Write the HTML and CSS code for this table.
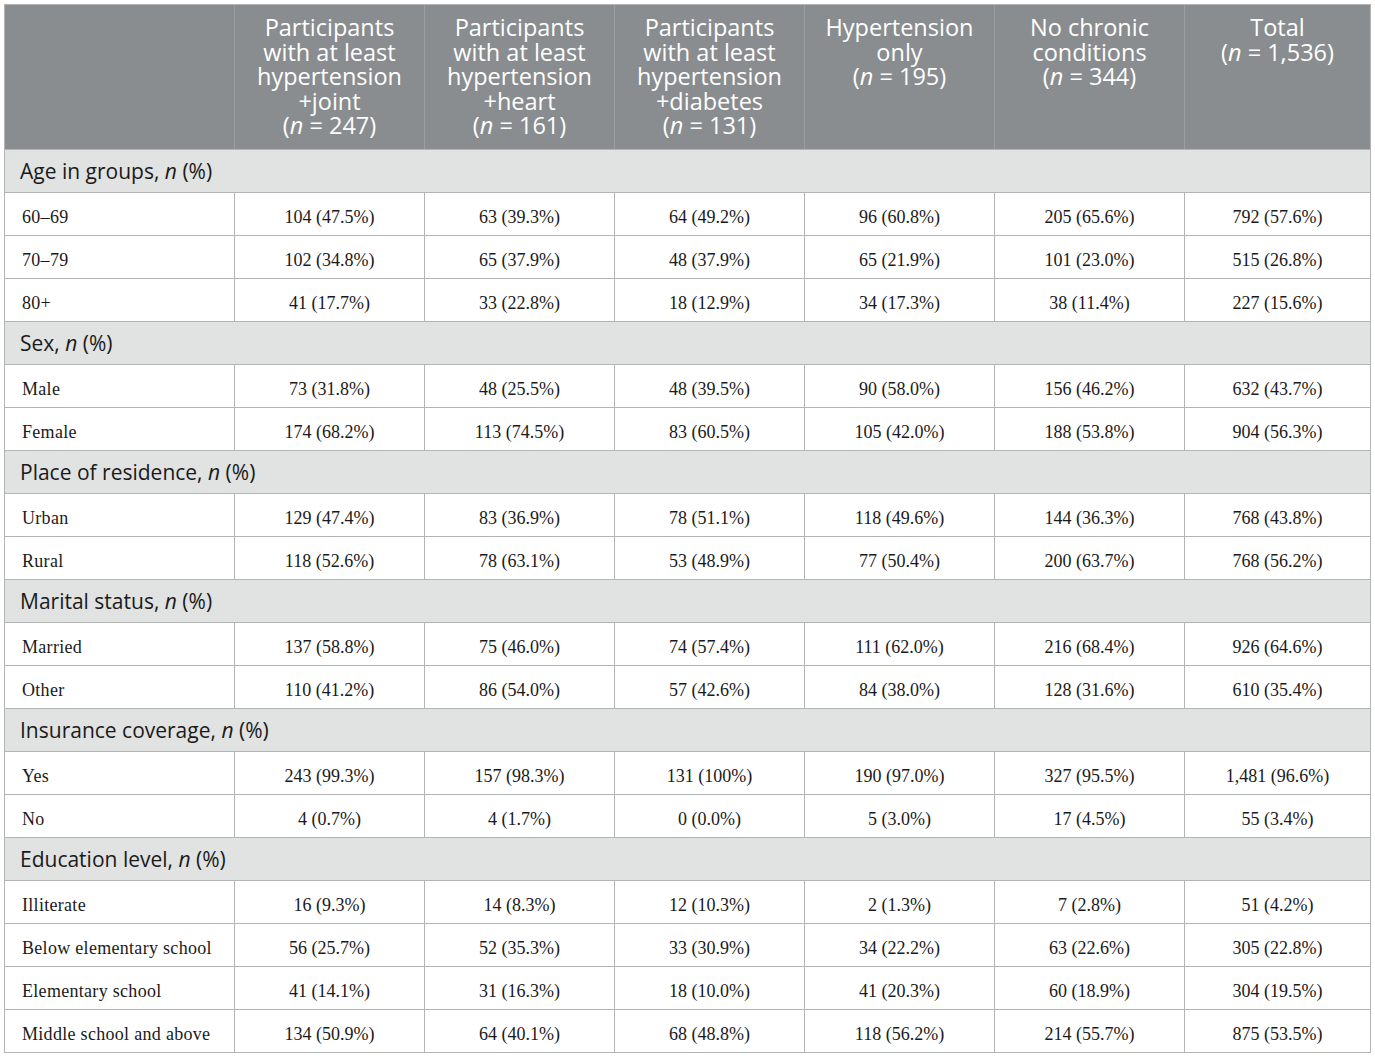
FILE: index.html
```html
<!DOCTYPE html>
<html>
<head>
<meta charset="utf-8">
<link rel="stylesheet" href="styles.css">
</head>
<body>
<table class="tbl">
<colgroup>
<col class="c-label"><col class="c-num"><col class="c-num"><col class="c-num"><col class="c-num"><col class="c-num"><col class="c-last">
</colgroup>
<thead>
<tr class="head">
<th></th>
<th>Participants<br>with at least<br>hypertension<br>+joint<br>(<i>n</i> = 247)</th>
<th>Participants<br>with at least<br>hypertension<br>+heart<br>(<i>n</i> = 161)</th>
<th>Participants<br>with at least<br>hypertension<br>+diabetes<br>(<i>n</i> = 131)</th>
<th>Hypertension<br>only<br>(<i>n</i> = 195)</th>
<th>No chronic<br>conditions<br>(<i>n</i> = 344)</th>
<th>Total<br>(<i>n</i> = 1,536)</th>
</tr>
</thead>
<tbody>
<tr class="sec"><td colspan="7">Age in groups, <i>n</i> (%)</td></tr>
<tr><td>60–69</td><td>104 (47.5%)</td><td>63 (39.3%)</td><td>64 (49.2%)</td><td>96 (60.8%)</td><td>205 (65.6%)</td><td>792 (57.6%)</td></tr>
<tr><td>70–79</td><td>102 (34.8%)</td><td>65 (37.9%)</td><td>48 (37.9%)</td><td>65 (21.9%)</td><td>101 (23.0%)</td><td>515 (26.8%)</td></tr>
<tr><td>80+</td><td>41 (17.7%)</td><td>33 (22.8%)</td><td>18 (12.9%)</td><td>34 (17.3%)</td><td>38 (11.4%)</td><td>227 (15.6%)</td></tr>
<tr class="sec"><td colspan="7">Sex, <i>n</i> (%)</td></tr>
<tr><td>Male</td><td>73 (31.8%)</td><td>48 (25.5%)</td><td>48 (39.5%)</td><td>90 (58.0%)</td><td>156 (46.2%)</td><td>632 (43.7%)</td></tr>
<tr><td>Female</td><td>174 (68.2%)</td><td>113 (74.5%)</td><td>83 (60.5%)</td><td>105 (42.0%)</td><td>188 (53.8%)</td><td>904 (56.3%)</td></tr>
<tr class="sec"><td colspan="7">Place of residence, <i>n</i> (%)</td></tr>
<tr><td>Urban</td><td>129 (47.4%)</td><td>83 (36.9%)</td><td>78 (51.1%)</td><td>118 (49.6%)</td><td>144 (36.3%)</td><td>768 (43.8%)</td></tr>
<tr><td>Rural</td><td>118 (52.6%)</td><td>78 (63.1%)</td><td>53 (48.9%)</td><td>77 (50.4%)</td><td>200 (63.7%)</td><td>768 (56.2%)</td></tr>
<tr class="sec"><td colspan="7">Marital status, <i>n</i> (%)</td></tr>
<tr><td>Married</td><td>137 (58.8%)</td><td>75 (46.0%)</td><td>74 (57.4%)</td><td>111 (62.0%)</td><td>216 (68.4%)</td><td>926 (64.6%)</td></tr>
<tr><td>Other</td><td>110 (41.2%)</td><td>86 (54.0%)</td><td>57 (42.6%)</td><td>84 (38.0%)</td><td>128 (31.6%)</td><td>610 (35.4%)</td></tr>
<tr class="sec"><td colspan="7">Insurance coverage, <i>n</i> (%)</td></tr>
<tr><td>Yes</td><td>243 (99.3%)</td><td>157 (98.3%)</td><td>131 (100%)</td><td>190 (97.0%)</td><td>327 (95.5%)</td><td>1,481 (96.6%)</td></tr>
<tr><td>No</td><td>4 (0.7%)</td><td>4 (1.7%)</td><td>0 (0.0%)</td><td>5 (3.0%)</td><td>17 (4.5%)</td><td>55 (3.4%)</td></tr>
<tr class="sec"><td colspan="7">Education level, <i>n</i> (%)</td></tr>
<tr><td>Illiterate</td><td>16 (9.3%)</td><td>14 (8.3%)</td><td>12 (10.3%)</td><td>2 (1.3%)</td><td>7 (2.8%)</td><td>51 (4.2%)</td></tr>
<tr><td>Below elementary school</td><td>56 (25.7%)</td><td>52 (35.3%)</td><td>33 (30.9%)</td><td>34 (22.2%)</td><td>63 (22.6%)</td><td>305 (22.8%)</td></tr>
<tr><td>Elementary school</td><td>41 (14.1%)</td><td>31 (16.3%)</td><td>18 (10.0%)</td><td>41 (20.3%)</td><td>60 (18.9%)</td><td>304 (19.5%)</td></tr>
<tr><td>Middle school and above</td><td>134 (50.9%)</td><td>64 (40.1%)</td><td>68 (48.8%)</td><td>118 (56.2%)</td><td>214 (55.7%)</td><td>875 (53.5%)</td></tr>
</tbody>
</table>
</body>
</html>
```

FILE: styles.css
```css
html, body {
  margin: 0;
  padding: 0;
  background: #ffffff;
}
body {
  padding: 4px 0 0 4px;
}
.tbl {
  border-collapse: collapse;
  table-layout: fixed;
  width: 1366px;
  border: 1px solid #b3b5b5;
}
.c-label { width: 230px; }
.c-num { width: 190px; }
.c-last { width: 186px; }
.head th {
  background: #898d8f;
  color: #ffffff;
  font-family: "Open Sans", "Lato", sans-serif;
  font-weight: 400;
  font-size: 23.5px;
  line-height: 24.5px;
  text-align: center;
  vertical-align: top;
  height: 145px;
  padding: 10px 2px 0 2px;
  box-sizing: border-box;
  border-left: 1px solid #9b9ea0;
  border-top: 1px solid #b3b5b5;
  border-bottom: 1px solid #b3b5b5;
  white-space: nowrap;
}
.head th:first-child { border-left: 1px solid #b3b5b5; }
.head th i { font-style: italic; }
tbody tr td {
  height: 43px;
  border: 1px solid #b3b5b5;
  font-family: "Liberation Serif", "Times New Roman", serif;
  font-size: 18px;
  color: #1a1a1a;
  text-align: center;
  padding: 7px 0 0 0;
  box-sizing: border-box;
}
tbody tr td:first-child {
  text-align: left;
  padding-left: 17px;
  letter-spacing: 0.3px;
}
tbody tr.sec td {
  background: #e1e2e2;
  font-family: "Open Sans", "Lato", sans-serif;
  font-size: 21px;
  text-align: left;
  padding: 0 0 0 15px;
  letter-spacing: 0;
}
```
